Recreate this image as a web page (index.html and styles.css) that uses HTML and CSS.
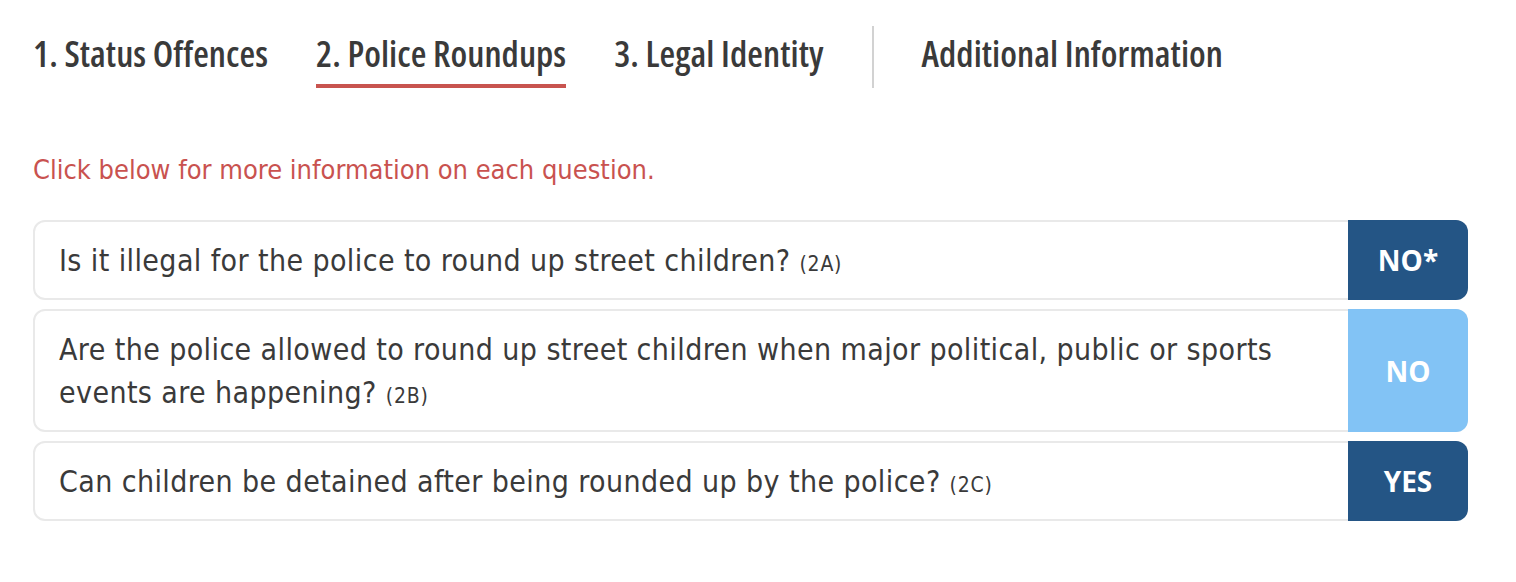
FILE: index.html
```html
<!DOCTYPE html>
<html lang="en">
<head>
<meta charset="utf-8">
<title>Police Roundups</title>
<link rel="stylesheet" href="styles.css">
</head>
<body>
<div class="page">
  <nav class="tabs">
    <a class="tab">1. Status Offences</a>
    <a class="tab active">2. Police Roundups</a>
    <a class="tab">3. Legal Identity</a>
    <span class="divider"></span>
    <a class="tab">Additional Information</a>
  </nav>
  <p class="hint">Click below for more information on each question.</p>
  <div class="questions">
    <div class="row">
      <div class="q">Is it illegal for the police to round up street children? <span class="code">(2A)</span></div>
      <div class="ans dark">NO*</div>
    </div>
    <div class="row">
      <div class="q">Are the police allowed to round up street children when major political, public or sports events are happening? <span class="code">(2B)</span></div>
      <div class="ans light">NO</div>
    </div>
    <div class="row">
      <div class="q">Can children be detained after being rounded up by the police? <span class="code">(2C)</span></div>
      <div class="ans dark">YES</div>
    </div>
  </div>
</div>
</body>
</html>
```
FILE: styles.css
```css
html, body {
  margin: 0;
  padding: 0;
  background: #fff;
}
.page {
  padding: 26px 0 0 33px;
  width: 1435px;
  font-family: "DejaVu Sans Condensed", "DejaVu Sans", sans-serif;
  font-stretch: condensed;
  color: #383838;
}
.tabs {
  display: flex;
  align-items: stretch;
  gap: 48px;
  height: 62px;
}
.tab {
  font-family: "Open Sans", "DejaVu Sans Condensed", sans-serif;
  font-stretch: condensed;
  font-size: 36px;
  font-weight: 650;
  color: #3a3a3a;
  line-height: 56px;
  letter-spacing: 0.05px;
  white-space: nowrap;
}
.tab.active {
  border-bottom: 4px solid #c8544f;
  height: 58px;
}
.divider {
  width: 2px;
  background: #d2d2d2;
}
.hint {
  margin: 66px 0 0 0;
  font-size: 27px;
  line-height: 32px;
  color: #c9524f;
}
.questions {
  margin-top: 34px;
  display: flex;
  flex-direction: column;
  gap: 9px;
}
.row {
  display: flex;
  border: 2px solid #e9e9e9;
  border-radius: 12px;
  box-sizing: border-box;
}
.q {
  flex: 1;
  padding: 17px 60px 16px 24px;
  font-size: 30px;
  line-height: 43px;
  letter-spacing: 0.4px;
  color: #3a3a3a;
}
.code {
  font-size: 21px;
  line-height: 1;
  letter-spacing: 0.8px;
}
.ans {
  width: 120px;
  margin: -2px -2px -2px 0;
  border-radius: 0 12px 12px 0;
  display: flex;
  align-items: center;
  justify-content: center;
  color: #fff;
  font-family: "Open Sans", "Liberation Sans", sans-serif;
  font-stretch: normal;
  font-weight: bold;
  font-size: 28px;
}
.dark { background: #245585; }
.light { background: #82c3f5; }
```
